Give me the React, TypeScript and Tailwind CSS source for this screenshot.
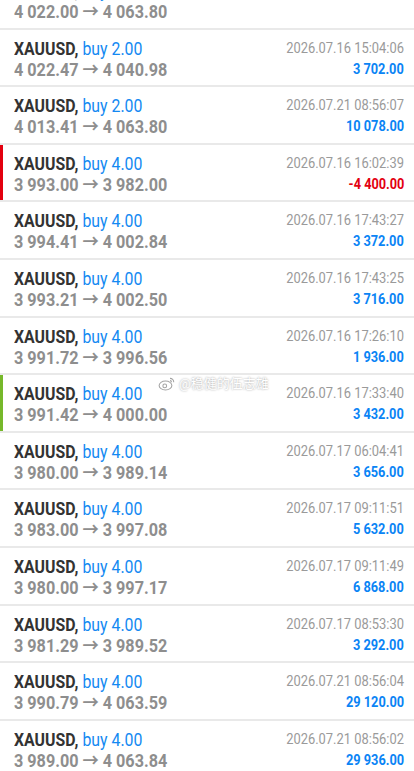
import React from "react";

type Row = {
  lots?: string;
  date?: string;
  prices: string;
  profit: string;
  bar?: "red" | "green";
};

const rows: Row[] = [
  { prices: "4 022.00 → 4 063.80", profit: "16 720.00" },
  { lots: "2.00", date: "2026.07.16 15:04:06", prices: "4 022.47 → 4 040.98", profit: "3 702.00" },
  { lots: "2.00", date: "2026.07.21 08:56:07", prices: "4 013.41 → 4 063.80", profit: "10 078.00" },
  { lots: "4.00", date: "2026.07.16 16:02:39", prices: "3 993.00 → 3 982.00", profit: "-4 400.00", bar: "red" },
  { lots: "4.00", date: "2026.07.16 17:43:27", prices: "3 994.41 → 4 002.84", profit: "3 372.00" },
  { lots: "4.00", date: "2026.07.16 17:43:25", prices: "3 993.21 → 4 002.50", profit: "3 716.00" },
  { lots: "4.00", date: "2026.07.16 17:26:10", prices: "3 991.72 → 3 996.56", profit: "1 936.00" },
  { lots: "4.00", date: "2026.07.16 17:33:40", prices: "3 991.42 → 4 000.00", profit: "3 432.00", bar: "green" },
  { lots: "4.00", date: "2026.07.17 06:04:41", prices: "3 980.00 → 3 989.14", profit: "3 656.00" },
  { lots: "4.00", date: "2026.07.17 09:11:51", prices: "3 983.00 → 3 997.08", profit: "5 632.00" },
  { lots: "4.00", date: "2026.07.17 09:11:49", prices: "3 980.00 → 3 997.17", profit: "6 868.00" },
  { lots: "4.00", date: "2026.07.17 08:53:30", prices: "3 981.29 → 3 989.52", profit: "3 292.00" },
  { lots: "4.00", date: "2026.07.21 08:56:04", prices: "3 990.79 → 4 063.59", profit: "29 120.00" },
  { lots: "4.00", date: "2026.07.21 08:56:02", prices: "3 989.00 → 4 063.84", profit: "29 936.00" },
];

function TradeRow({ r }: { r: Row }) {
  const neg = r.profit.startsWith("-");
  return (
    <div className="relative flex h-[57.6px] border-b-2 border-[#e9e9e9] bg-white">
      {r.bar === "red" && <div className="absolute left-0 top-0 bottom-0 w-[3px] bg-[#e3000f]" />}
      {r.bar === "green" && <div className="absolute left-0 top-0 bottom-0 w-[3px] bg-[#76b82a]" />}
      <div className="flex flex-1 flex-col items-start pl-[14px] pt-[8px]">
        <div className="origin-left scale-x-[0.88] text-[18px] leading-[22px] whitespace-nowrap">
          <span className="font-bold text-[#333333]">XAUUSD,</span>{" "}
          <span className="text-[#1489f2]">buy {r.lots}</span>
        </div>
        <div className="origin-left scale-x-[0.9] text-[18px] leading-[20px] font-bold text-[#8e8e8e] whitespace-nowrap">
          {r.prices}
        </div>
      </div>
      <div className="flex flex-col items-end pr-[10px] pt-[9px]">
        <div className="origin-right scale-x-[0.86] text-[15px] leading-[18px] text-[#9a9a9a] whitespace-nowrap">
          {r.date}
        </div>
        <div
          className={
            "mt-[4px] origin-right scale-x-[0.88] text-[14.5px] leading-[18px] font-bold whitespace-nowrap " +
            (neg ? "text-[#e3000f]" : "text-[#0a84f5]")
          }
        >
          {r.profit}
        </div>
      </div>
    </div>
  );
}

export default function App() {
  return (
    <div
      className="relative h-[771px] w-[414px] overflow-hidden bg-white"
      style={{ fontFamily: "Roboto, 'Noto Sans CJK SC', sans-serif" }}
    >
      <div className="-mt-[28px]">
        {rows.map((r, i) => (
          <TradeRow key={i} r={r} />
        ))}
      </div>
      <div className="absolute left-[158px] top-[374px] flex items-center gap-[3px] text-[13px] text-white opacity-90 [text-shadow:0_0_2px_rgba(0,0,0,0.45)]">
        <svg width="18" height="16" viewBox="0 0 24 20" fill="none" stroke="#9a9a9a" strokeWidth="1.4">
          <ellipse cx="10" cy="12" rx="8.5" ry="6" fill="white" />
          <circle cx="9" cy="12.5" r="2.5" />
          <path d="M16 2.5 a5 5 0 0 1 5 5" />
          <path d="M16 5.5 a2 2 0 0 1 2 2" />
        </svg>
        <span>@稳健的伍志雄</span>
      </div>
    </div>
  );
}
